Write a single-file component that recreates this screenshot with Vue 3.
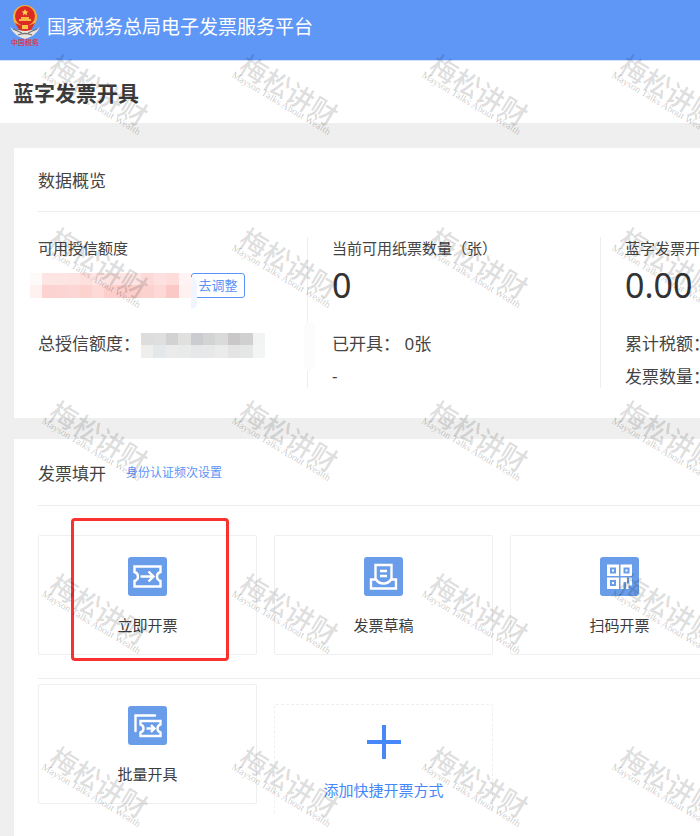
<template>
  <div class="page">
    <header class="topbar">
      <svg class="emblem" viewBox="0 0 32 42" role="img" aria-label="中国税务">
        <path d="M1 23 Q7 28 10 26 L22 26 Q26 28 31 23 Q27 32 16 35 Q5 32 1 23 Z" fill="#e9e6e0" />
        <path d="M4 25 L13 29 M28 25 L19 29 M9 31 Q16 28 23 31" stroke="#77736e" stroke-width="1.3" fill="none" />
        <circle cx="16" cy="13" r="12" fill="#f0b23c" />
        <circle cx="16" cy="12" r="10" fill="#dc2b24" />
        <path d="M16 5 l1 2.2 2.4 .2 -1.8 1.6 .6 2.4 -2.2 -1.3 -2.2 1.3 .6 -2.4 -1.8 -1.6 2.4 -.2 Z" fill="#ffd34f" />
        <path d="M10 17 h12 v-2 h-2 v-2 h-8 v2 h-2 Z" fill="#f9b845" />
        <path d="M6 19 Q16 24 26 19 L22 26 Q16 28 10 26 Z" fill="#d93029" />
        <path d="M13 21 h6 v4 h-6 Z" fill="#f6c64a" />
        <text x="16" y="41" text-anchor="middle" class="emblem-text">中国税务</text>
      </svg>
      <span class="brand">国家税务总局电子发票服务平台</span>
    </header>

    <div class="title-bar">
      <h1>蓝字发票开具</h1>
    </div>

    <main class="content">
      <section class="panel overview">
        <h2 class="panel-head">数据概览</h2>
        <div class="stats">
          <div class="stat">
            <p class="stat-label">可用授信额度</p>
            <div class="stat-value">
              <span class="mosaic mosaic-pink">
                <i v-for="(color, i) in pinkBlocks" :key="i" :style="{ background: color }"></i>
              </span>
              <button type="button" class="adjust-btn">去调整</button>
            </div>
            <div class="stat-row">
              <span>总授信额度：</span>
              <span class="mosaic mosaic-gray">
                <i v-for="(color, i) in grayBlocks" :key="i" :style="{ background: color }"></i>
              </span>
            </div>
          </div>
          <div class="stat">
            <p class="stat-label">当前可用纸票数量（张）</p>
            <div class="stat-value">0</div>
            <div class="stat-row">已开具： 0张</div>
            <div class="stat-row">-</div>
          </div>
          <div class="stat">
            <p class="stat-label">蓝字发票开具</p>
            <div class="stat-value">0.00</div>
            <div class="stat-row">累计税额：</div>
            <div class="stat-row">发票数量：</div>
          </div>
        </div>
      </section>

      <section class="panel issue">
        <div class="panel-head">
          <h2>发票填开</h2>
          <a href="#">身份认证频次设置</a>
        </div>

        <div class="entries">
          <button v-for="item in mainEntries" :key="item.name" type="button" class="entry" :class="{ marked: item.marked }">
            <svg class="entry-icon" viewBox="0 0 39 39" fill="none" stroke="#fff" stroke-width="2.4">
              <rect width="39" height="39" rx="3" fill="#699ce9" stroke="none" />
              <g v-if="item.icon === 'ticket'">
                <path d="M6.5 9.5 H32.5 V15 Q29 16 29 19.5 T32.5 24 V29.5 H6.5 V24 Q10 23 10 19.5 T6.5 15 Z" />
                <path d="M12.5 19.5 H25 M20.5 14.5 L25.5 19.5 L20.5 24.5" />
              </g>
              <g v-else-if="item.icon === 'draft'">
                <path d="M11.5 22 V8 H27.5 V22" />
                <path d="M7 22.5 H12 Q14.5 26.5 19.5 26.5 T27 22.5 H32 V31.5 H7 Z" />
                <path d="M16 14 H23 M16 19 H23" />
              </g>
              <g v-else stroke="none">
                <path d="M7 7.5 H19 V19 H7 Z M20.5 7.5 H32 V19 H20.5 Z M7 20.5 H19 V32 H7 Z M20.5 20.5 H32 V32 H20.5 Z" fill="#fff" />
                <path d="M10 10.5 h6 v6 h-6 Z M23.5 10.5 h6 v6 h-6 Z M10 23 h6 v6 h-6 Z M23.5 25 h2.5 v7 h-2.5 Z M27 20.5 h2 v6 h-2 Z M28.5 28.5 h3.5 v3.5 h-3.5 Z" fill="#699ce9" />
                <path d="M12 12.5 h2 v2 h-2 Z M25.5 12.5 h2 v2 h-2 Z M12 25 h2 v2 h-2 Z" fill="#fff" />
              </g>
            </svg>
            <span>{{ item.name }}</span>
          </button>
        </div>

        <div class="entries extra">
          <button type="button" class="entry">
            <svg class="entry-icon" viewBox="0 0 39 39" fill="none" stroke="#fff" stroke-width="2.4">
              <rect width="39" height="39" rx="3" fill="#699ce9" stroke="none" />
              <path d="M7.5 25 V9.5 H27" stroke-linecap="round" />
              <path d="M12.5 15 H32.5 V18.5 Q29.5 19.5 29.5 22.5 T32.5 26.5 V30 H12.5 V26.5 Q15.5 25.5 15.5 22.5 T12.5 18.5 Z" />
              <path d="M18.5 22.5 H26 M23 19 L26.5 22.5 L23 26" />
            </svg>
            <span>批量开具</span>
          </button>
          <button type="button" class="entry add">
            <svg class="plus" viewBox="0 0 34 34">
              <path d="M17 0 V34 M0 17 H34" stroke="#4688f7" stroke-width="4" />
            </svg>
            <span>添加快捷开票方式</span>
          </button>
        </div>
      </section>
    </main>

    <div class="watermarks" aria-hidden="true">
      <div v-for="n in 20" :key="n" class="watermark">
        <div class="mark">
          <b>梅松讲财</b>
          <small>Mayson Talks About Wealth</small>
        </div>
      </div>
    </div>
  </div>
</template>

<script setup>
const pinkBlocks = [
  '#fffafa', '#fde5e4', '#fde5e4', '#fde3e2', '#fddfde', '#fee6e5', '#fde4e3', '#fde3e2', '#fde5e4', '#fddad8', '#fde0df', '#fddcda', '#fff3f3',
  '#fef1f0', '#fcd3d0', '#fcd5d2', '#fcd6d4', '#fcd2cf', '#fddad8', '#fccfcc', '#fccdca', '#fccfcc', '#fcd2cf', '#fcd8d6', '#fbc9c5', '#fef1f0',
];

const grayBlocks = [
  '#dddddd', '#dfdfdf', '#d2d2d3', '#e0e0df', '#cbccd0', '#d2d4d4', '#dadada', '#cac7c9', '#d0d0d1', '#f2f3f3',
  '#eeeeed', '#e5e8eb', '#ebebeb', '#e9eaea', '#e6e7e8', '#e7e9e8', '#eaebea', '#e4e4e5', '#e5e6e6', '#f3f4f4',
];

const mainEntries = [
  { name: '立即开票', icon: 'ticket', marked: true },
  { name: '发票草稿', icon: 'draft' },
  { name: '扫码开票', icon: 'qrcode' },
];
</script>

<style>
body { margin: 0; background: #efefef; }
</style>

<style scoped>
.page {
  position: relative; min-height: 100vh; overflow: hidden; background: #efefef; color: #444;
  font-family: "Noto Sans", "Noto Sans CJK SC", sans-serif;
}
.page * { box-sizing: border-box; }
h1, h2, p { margin: 0; }
button { font-family: inherit; cursor: pointer; }

.topbar {
  display: flex; align-items: flex-start; gap: 6px; height: 60px; padding: 4px 9px;
  background: #5f97f7; color: #fff;
}
.emblem { width: 32px; height: 42px; }
.emblem-text { font-size: 7px; font-weight: 700; fill: #d6425a; }
.brand { font-size: 19px; line-height: 46px; white-space: nowrap; }

.title-bar { height: 63px; padding: 0 13px; background: #fff; border-top: 1px solid #cfdffc; }
.title-bar h1 { font-size: 21px; line-height: 64px; font-weight: 700; color: #3c3c3c; }

.content { display: flex; flex-direction: column; gap: 21px; padding: 25px 0 0 14px; }
.panel { background: #fff; overflow: hidden; }
.overview { padding-bottom: 30px; }
.panel-head {
  display: flex; align-items: center; gap: 20px; height: 64px; margin-left: 24px;
  border-bottom: 1px solid #ececec; font-size: 17px; font-weight: 400; white-space: nowrap;
}
.panel-head h2 { font-size: 17px; font-weight: 400; }
.panel-head a { font-size: 12px; line-height: 20px; padding-top: 2px; color: #5b93f8; text-decoration: none; }

.stats { display: flex; padding-top: 25px; }
.stat {
  position: relative; flex: 0 0 293px; height: 151px; padding-left: 24px; white-space: nowrap;
}
.stat + .stat { border-left: 1px solid #eee; }
.stat:nth-child(2)::before {
  content: ''; position: absolute; left: -4px; top: 85px; width: 11px; height: 49px;
  border-radius: 5px; background: #fcfcfc;
}
.stat-label { font-size: 15px; line-height: 22px; }
.stat-value {
  display: flex; align-items: center; height: 52px; margin-bottom: 15px;
  font-size: 34px; line-height: 52px; color: #333;
}
.stat-row { display: flex; align-items: center; height: 33px; font-size: 17px; white-space: pre; }

.mosaic { display: grid; height: 25px; grid-template-rows: 1fr 1fr; }
.mosaic-pink { width: 161px; margin-left: -8px; grid-template-columns: repeat(13, 1fr); }
.mosaic-gray { width: 124px; margin: 5px 0 0 1px; grid-template-columns: repeat(10, 1fr); }

.adjust-btn {
  position: relative; width: 54px; height: 25px; padding: 0; border: 1px solid #5b93f8;
  border-radius: 3px; background: #fff; color: #5b93f8; font-size: 13px; line-height: 20px;
}
.adjust-btn::before {
  content: ''; position: absolute; left: -1px; top: 3px; width: 6px; height: 32px;
  border-radius: 0 6px 6px 0; background: #f0f5ff;
}

.issue { padding-bottom: 40px; }
.issue .panel-head { height: 67px; }
.entries { display: flex; gap: 17px; margin-left: 24px; padding: 29px 0 23px; }
.entries.extra { align-items: flex-start; padding: 5px 0 0; border-top: 1px solid #ececec; }
.entry {
  position: relative; display: flex; flex: 0 0 219px; flex-direction: column; align-items: center;
  gap: 17px; height: 120px; padding: 21px 0 0; border: 1px solid #efefef; border-radius: 2px;
  background: #fff; color: #3c3c3c; font-size: 15px; line-height: 24px;
}
.entry-icon { width: 39px; height: 39px; }
.entry.marked::after {
  content: ''; position: absolute; inset: -18px 27px -7px 32px;
  border: 3px solid #f9312f; border-radius: 4px;
}
.entry.add {
  height: 111px; margin-top: 20px; padding-top: 20px; gap: 19px; border-style: dashed; border-bottom: 0; color: #4688f7;
}
.plus { width: 34px; height: 34px; }

.watermarks {
  position: absolute; inset: 7px auto auto 2px; z-index: 5; display: grid;
  grid-template-columns: repeat(4, 190px); grid-auto-rows: 173px; pointer-events: none;
}
.watermark { display: flex; align-items: center; justify-content: center; }
.mark { transform: rotate(31deg); color: rgba(0, 0, 0, 0.15); white-space: nowrap; text-align: center; }
.mark b { display: block; font-size: 27px; line-height: 22px; font-weight: 500; }
.mark small { display: block; font: 10px/8px "Liberation Serif", serif; color: rgba(0, 0, 0, 0.22); }
</style>
